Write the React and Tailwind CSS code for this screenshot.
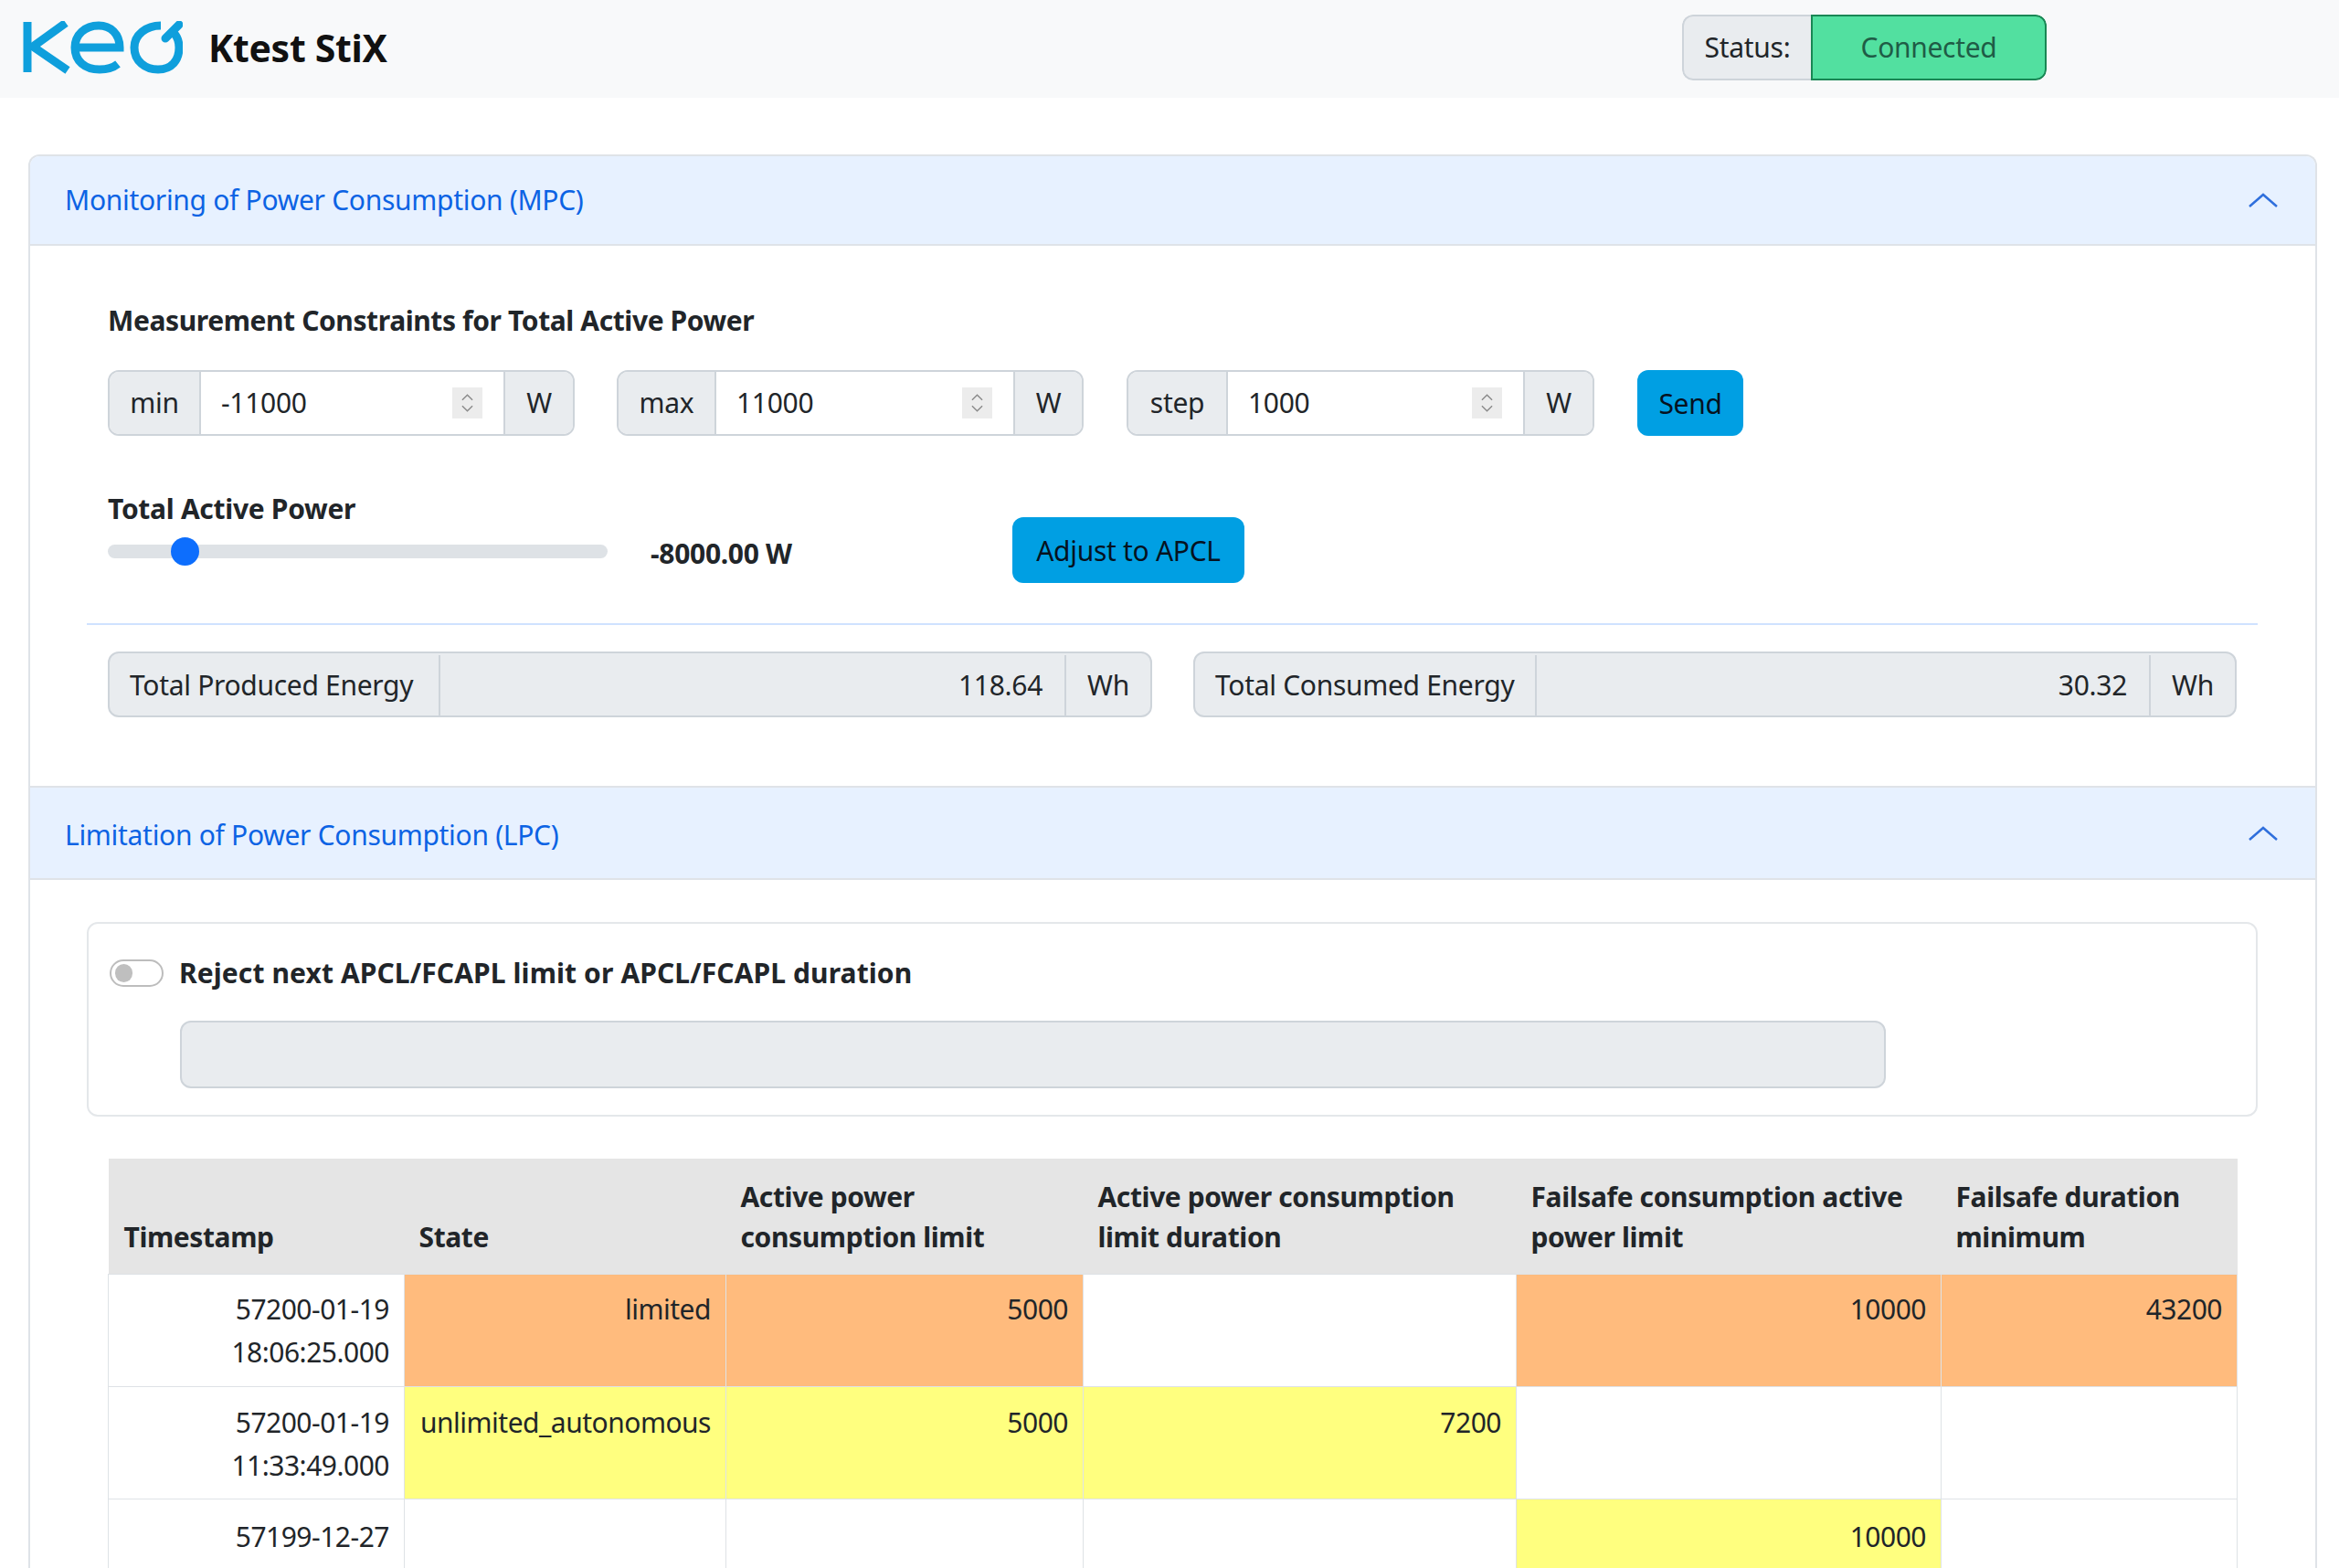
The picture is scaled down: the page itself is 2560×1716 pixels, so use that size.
import React from 'react';

const Chevron = ({ className }) => (
    <svg viewBox="0 0 32 16" className={className} fill="none" stroke="currentColor" strokeWidth="2.5">
        <path d="M1 15 L16 2 L31 15" />
    </svg>
);

function Logo() {
    return (
        <svg viewBox="0 0 175 58" className="w-[175px] h-[58px] shrink-0" fill="none" stroke="#0f9fdc" strokeWidth="9">
            <path d="M5 1 V56" />
            <path d="M47 2 L11 28 L49 54" />
            <path d="M58 29 H106 C106 14 96 5 83 5 C68 5 57 15 57 29 C57 44 68 53 84 53 C92 53 99 51 104 47" />
            <path d="M151 5 C135 5 122 15 122 29 C122 44 134 53 148 53 C163 53 171 43 171 29 C171 22 169 17 165 13" />
            <path d="M171 4 L156 19" strokeLinecap="round" />
        </svg>
    );
}

function Spinner() {
    return (
        <span className="w-[33px] h-[34px] bg-[#ececec] flex flex-col items-center justify-center gap-[4px] shrink-0">
            <svg viewBox="0 0 14 8" className="w-[13px] h-[8px]" fill="none" stroke="#8a8a8a" strokeWidth="1.5"><path d="M1 7 L7 1 L13 7" /></svg>
            <svg viewBox="0 0 14 8" className="w-[13px] h-[8px]" fill="none" stroke="#8a8a8a" strokeWidth="1.5"><path d="M1 1 L7 7 L13 1" /></svg>
        </span>
    );
}

function NumberGroup({ label, value, width, labelWidth, unitWidth }) {
    return (
        <div className={`flex h-[72px] border-2 border-[#ced4da] rounded-[12px] overflow-hidden ${width}`}>
            <span className={`shrink-0 bg-[#e9ecef] flex items-center justify-center border-r-2 border-[#ced4da] ${labelWidth}`}>{label}</span>
            <div className="flex-1 min-w-0 flex items-center pl-[22px] pr-[23px] bg-white">
                <input readOnly value={value} className="flex-1 min-w-0 outline-none" />
                <Spinner />
            </div>
            <span className={`shrink-0 bg-[#e9ecef] flex items-center justify-center border-l-2 border-[#ced4da] ${unitWidth}`}>W</span>
        </div>
    );
}

function EnergyGroup({ label, value, width, labelWidth }) {
    return (
        <div className={`flex h-[72px] pt-[2px] border-2 border-[#ced4da] rounded-[12px] overflow-hidden bg-[#e9ecef] ${width}`}>
            <span className={`flex items-center pl-[22px] border-r-2 border-[#ced4da] ${labelWidth}`}>{label}</span>
            <span className="flex-1 flex items-center justify-end pr-[24px]">{value}</span>
            <span className="w-[94px] flex items-center justify-center border-l-2 border-[#ced4da]">Wh</span>
        </div>
    );
}

function AccordionHeader({ title, height, titleClass }) {
    return (
        <div className={`${height} bg-[#e7f1ff] text-[#0c63e4] flex items-center justify-between pl-[38px] pr-[41px] border-b-2 border-[#dfe3e8]`}>
            <span className={titleClass}>{title}</span>
            <Chevron className="w-[32px] h-[16px] text-[#2f6fdc]" />
        </div>
    );
}

const orange = 'bg-[#ffbb7d]';
const yellow = 'bg-[#ffff7f]';

const rows = [
    { ts: ['57200-01-19', '18:06:25.000'], pad: 'pt-[14px]', state: 'limited', color: orange, apcl: 5000, dur: null, fail: 10000, min: 43200, failColor: orange, minColor: orange, durColor: '' },
    { ts: ['57200-01-19', '11:33:49.000'], pad: 'pt-[15px]', state: 'unlimited_autonomous', color: yellow, apcl: 5000, dur: 7200, fail: null, min: null, failColor: '', minColor: '', durColor: yellow },
    { ts: ['57199-12-27', '20:18:34.000'], pad: 'pt-[17px]', state: null, color: '', apcl: null, dur: null, fail: 10000, min: null, failColor: yellow, minColor: '', durColor: '' },
];

const cellClass = 'border border-[#dee2e6] text-right align-top px-[16px] pb-[12px] h-[123px] leading-[47px] tracking-[-0.5px]';

export default function App() {
    return (
        <div className="w-[2560px] h-[1716px] overflow-hidden bg-white text-[#212529] text-[30px] leading-[46px] tracking-[-0.3px] font-['Noto_Sans',sans-serif]">
            <header className="h-[107px] bg-[#f8f9fa] flex items-start justify-between pt-[16px] pl-[25px] pr-[320px]">
                <div className="flex items-center h-[72px]">
                    <Logo />
                    <span className="ml-[28px] text-[41px] font-bold text-[#111]">Ktest StiX</span>
                </div>
                <div className="flex h-[72px] rounded-[12px] overflow-hidden">
                    <span className="w-[141px] bg-[#e9ecef] border-2 border-r-0 border-[#ced4da] rounded-l-[12px] flex items-center justify-center">Status:</span>
                    <span className="w-[258px] bg-[#52e0a0] border-2 border-[#198754] rounded-r-[12px] flex items-center justify-center text-[#1f5c46]">Connected</span>
                </div>
            </header>

            <main className="ml-[31px] mr-[24px] mt-[62px] border-2 border-b-0 border-[#dfe3e8] rounded-t-[12px] overflow-hidden">
                <AccordionHeader title="Monitoring of Power Consumption (MPC)" height="h-[98px]" />
                <section className="pl-[62px] pr-[63px] pt-[59px] pb-[75px] border-b-2 border-[#dfe3e8]">
                    <div className="pl-[23px] pr-[23px]">
                        <h2 className="font-bold tracking-[-0.4px]">Measurement Constraints for Total Active Power</h2>
                        <div className="flex mt-[31px]">
                            <NumberGroup label="min" value="-11000" width="w-[511px]" labelWidth="w-[100px]" unitWidth="w-[76px]" />
                            <div className="ml-[46px]">
                                <NumberGroup label="max" value="11000" width="w-[511px]" labelWidth="w-[107px]" unitWidth="w-[75px]" />
                            </div>
                            <div className="ml-[47px]">
                                <NumberGroup label="step" value="1000" width="w-[512px]" labelWidth="w-[109px]" unitWidth="w-[76px]" />
                            </div>
                            <button className="ml-[47px] pt-[2px] w-[116px] h-[72px] rounded-[12px] bg-[#009fe3] text-[#06121f]">Send</button>
                        </div>
                        <div className="flex mt-[57px]">
                            <div className="w-[547px]">
                                <div className="font-bold">Total Active Power</div>
                                <div className="relative h-[15px] mt-[16px] rounded-full bg-[#dee2e6]">
                                    <span className="absolute left-[69px] top-[-8px] w-[31px] h-[31px] rounded-full bg-[#0d6efd]" />
                                </div>
                            </div>
                            <div className="ml-[47px] mt-[49px] font-bold w-[396px]">-8000.00 W</div>
                            <button className="mt-[32px] pt-[2px] w-[254px] h-[72px] rounded-[12px] bg-[#009fe3] text-[#06121f]">Adjust to APCL</button>
                        </div>
                    </div>
                    <hr className="mt-[44px] border-0 border-t-2 border-[#cfe2ff]" />
                    <div className="flex gap-[45px] mt-[29px] pl-[23px]">
                        <EnergyGroup label="Total Produced Energy" value="118.64" width="w-[1143px]" labelWidth="w-[362px]" />
                        <EnergyGroup label="Total Consumed Energy" value="30.32" width="w-[1142px]" labelWidth="w-[374px]" />
                    </div>
                </section>

                <AccordionHeader title="Limitation of Power Consumption (LPC)" height="h-[101px]" titleClass="pt-[4px]" />
                <section className="pl-[62px] pr-[63px] pt-[46px]">
                    <div className="h-[213px] border-2 border-[#e4e7ea] rounded-[12px] pt-[31px] pl-[23px]">
                        <div className="flex items-center">
                            <span className="w-[59px] h-[30px] rounded-full border-2 border-[#bdbdbd] flex items-center pl-[4px]">
                                <span className="w-[19px] h-[20px] rounded-full bg-[#bfbfbf]" />
                            </span>
                            <span className="ml-[17px] font-bold tracking-[0.1px]">Reject next APCL/FCAPL limit or APCL/FCAPL duration</span>
                        </div>
                        <div className="ml-[77px] mt-[29px] w-[1867px] h-[74px] bg-[#e9ecef] border-2 border-[#ced4da] rounded-[12px]" />
                    </div>
                    <table className="mt-[46px] ml-[23px] w-[2330px] table-fixed border-collapse">
                        <colgroup>
                            <col className="w-[324px]" />
                            <col className="w-[352px]" />
                            <col className="w-[391px]" />
                            <col className="w-[474px]" />
                            <col className="w-[465px]" />
                            <col className="w-[324px]" />
                        </colgroup>
                        <thead>
                            <tr className="h-[126px] bg-[#e5e5e5] font-bold text-left leading-[44px] tracking-[-0.4px]">
                                <th className="px-[17px] pb-[18px] align-bottom">Timestamp</th>
                                <th className="px-[16px] pb-[18px] align-bottom">State</th>
                                <th className="px-[16px] pb-[18px] align-bottom">Active power consumption limit</th>
                                <th className="px-[16px] pb-[18px] align-bottom">Active power consumption limit duration</th>
                                <th className="px-[16px] pb-[18px] align-bottom">Failsafe consumption active power limit</th>
                                <th className="px-[16px] pb-[18px] align-bottom">Failsafe duration minimum</th>
                            </tr>
                        </thead>
                        <tbody>
                            {rows.map((row) => (
                                <tr key={row.ts[1]}>
                                    <td className={`${cellClass} ${row.pad}`}>{row.ts[0]}<br />{row.ts[1]}</td>
                                    <td className={`${cellClass} ${row.pad} ${row.color}`}>{row.state}</td>
                                    <td className={`${cellClass} ${row.pad} ${row.apcl ? row.color : ''}`}>{row.apcl}</td>
                                    <td className={`${cellClass} ${row.pad} ${row.durColor}`}>{row.dur}</td>
                                    <td className={`${cellClass} ${row.pad} ${row.failColor}`}>{row.fail}</td>
                                    <td className={`${cellClass} ${row.pad} ${row.minColor}`}>{row.min}</td>
                                </tr>
                            ))}
                        </tbody>
                    </table>
                </section>
            </main>
        </div>
    );
}
